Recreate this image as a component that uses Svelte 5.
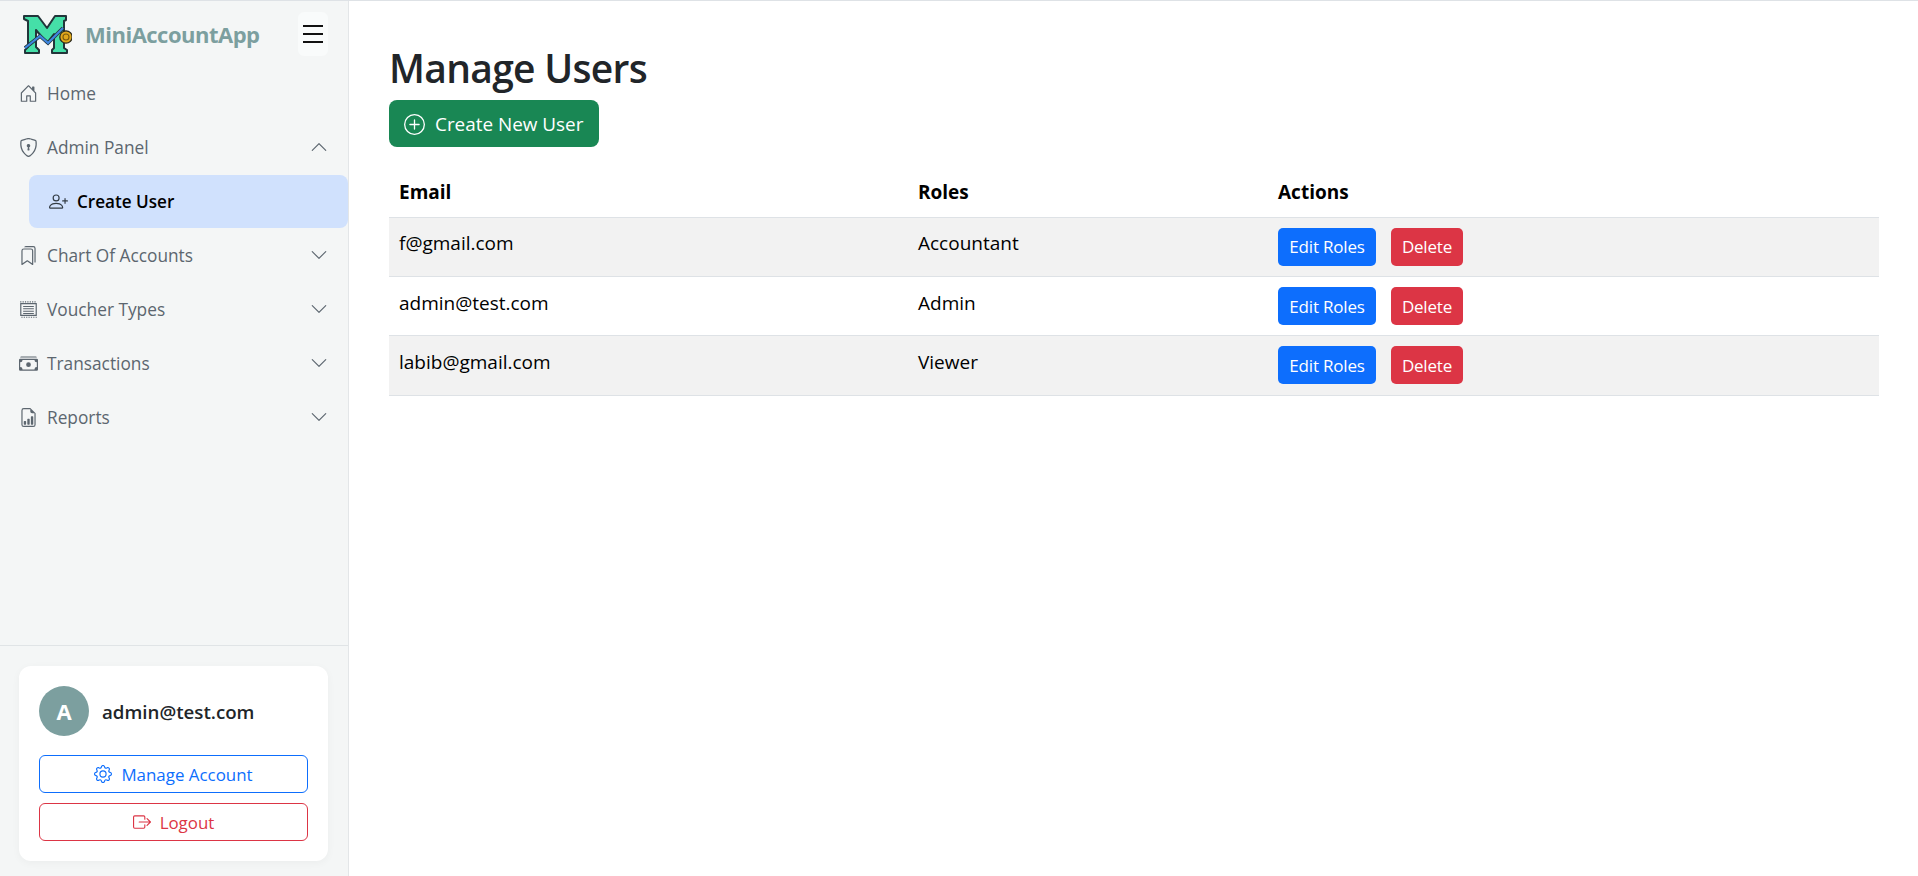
<script>
  const chevronDown = 'M1.646 4.646a.5.5 0 0 1 .708 0L8 10.293l5.646-5.647a.5.5 0 0 1 .708.708l-6 6a.5.5 0 0 1-.708 0l-6-6a.5.5 0 0 1 0-.708z';
  const chevronUp = 'M7.646 4.646a.5.5 0 0 1 .708 0l6 6a.5.5 0 0 1-.708.708L8 5.707l-5.646 5.647a.5.5 0 0 1-.708-.708l6-6z';

  const icons = {
    home: 'M8.354 1.146a.5.5 0 0 0-.708 0l-6 6A.5.5 0 0 0 1.5 7.5v7a.5.5 0 0 0 .5.5h4.5a.5.5 0 0 0 .5-.5v-4h2v4a.5.5 0 0 0 .5.5H14a.5.5 0 0 0 .5-.5v-7a.5.5 0 0 0-.146-.354L13 5.793V2.5a.5.5 0 0 0-.5-.5h-1a.5.5 0 0 0-.5.5v1.293L8.354 1.146zM2.5 14V7.707l5.5-5.5 5.5 5.5V14H10v-4a.5.5 0 0 0-.5-.5h-3a.5.5 0 0 0-.5.5v4H2.5z',
    shield: 'M5.338 1.59a61.44 61.44 0 0 0-2.837.856.481.481 0 0 0-.328.39c-.554 4.157.726 7.19 2.253 9.188a10.725 10.725 0 0 0 2.287 2.233c.346.244.652.42.893.533.12.057.218.095.293.118a.55.55 0 0 0 .101.025.615.615 0 0 0 .1-.025c.076-.023.174-.061.294-.118.24-.113.547-.29.893-.533a10.726 10.726 0 0 0 2.287-2.233c1.527-1.997 2.807-5.031 2.253-9.188a.48.48 0 0 0-.328-.39c-.651-.213-1.75-.56-2.837-.855C9.552 1.29 8.531 1.067 8 1.067c-.53 0-1.552.223-2.662.524zM5.072.56C6.157.265 7.31 0 8 0s1.843.265 2.928.56c1.11.3 2.229.655 2.887.87a1.54 1.54 0 0 1 1.044 1.262c.596 4.477-.787 7.795-2.465 9.99a11.775 11.775 0 0 1-2.517 2.453 7.159 7.159 0 0 1-1.048.625c-.28.132-.581.24-.829.24s-.548-.108-.829-.24a7.158 7.158 0 0 1-1.048-.625 11.777 11.777 0 0 1-2.517-2.453C1.928 10.487.545 7.169 1.141 2.692A1.54 1.54 0 0 1 2.185 1.43 62.456 62.456 0 0 1 5.072.56zM9.5 6.5a1.5 1.5 0 0 1-1 1.415l.385 1.99a.5.5 0 0 1-.491.595h-.788a.5.5 0 0 1-.49-.595l.384-1.99a1.5 1.5 0 1 1 2-1.415z',
    person: 'M6 8a3 3 0 1 0 0-6 3 3 0 0 0 0 6zm2-3a2 2 0 1 1-4 0 2 2 0 0 1 4 0zm4 8c0 1-1 1-1 1H1s-1 0-1-1 1-4 6-4 6 3 6 4zm-1-.004c-.001-.246-.154-.986-.832-1.664C9.516 10.68 8.289 10 6 10c-2.29 0-3.516.68-4.168 1.332-.678.678-.83 1.418-.832 1.664h10zM13.5 5a.5.5 0 0 1 .5.5V7h1.5a.5.5 0 0 1 0 1H14v1.5a.5.5 0 0 1-1 0V8h-1.5a.5.5 0 0 1 0-1H13V5.5a.5.5 0 0 1 .5-.5z',
    bookmarks: 'M2 4a2 2 0 0 1 2-2h6a2 2 0 0 1 2 2v11.5a.5.5 0 0 1-.777.416L7 13.101l-4.223 2.815A.5.5 0 0 1 2 15.5V4zm2-1a1 1 0 0 0-1 1v10.566l3.723-2.482a.5.5 0 0 1 .554 0L11 14.566V4a1 1 0 0 0-1-1H4zM4.268 1H12a1 1 0 0 1 1 1v11.768l.223.148A.5.5 0 0 0 14 13.5V2a2 2 0 0 0-2-2H6a2 2 0 0 0-1.732 1z',
    receipt: 'M1 2.5h14v11H1zM2 3.5v9h12v-9zM1 1h1v1H1zM3 1h1v1H3zM5 1h1v1H5zM7 1h1v1H7zM9 1h1v1H9zM11 1h1v1h-1zM13 1h1v1h-1zM2 14h1v1H2zM4 14h1v1H4zM6 14h1v1H6zM8 14h1v1H8zM10 14h1v1h-1zM12 14h1v1h-1zM14 14h1v1h-1zM3.5 5h9v.8h-9zM3.5 7h9v.8h-9zM3.5 9h9v.8h-9zM3.5 11h9v.8h-9z',
    cash: 'M1 3a1 1 0 0 1 1-1h12a1 1 0 0 1 1 1H1zm7 8a2 2 0 1 0 0-4 2 2 0 0 0 0 4zM0 5a1 1 0 0 1 1-1h14a1 1 0 0 1 1 1v8a1 1 0 0 1-1 1H1a1 1 0 0 1-1-1V5zm3 0a2 2 0 0 1-2 2v4a2 2 0 0 1 2 2h10a2 2 0 0 1 2-2V7a2 2 0 0 1-2-2H3z',
    report: 'M10 13.5a.5.5 0 0 0 .5.5h1a.5.5 0 0 0 .5-.5v-6a.5.5 0 0 0-.5-.5h-1a.5.5 0 0 0-.5.5v6zm-2.5.5a.5.5 0 0 1-.5-.5v-4a.5.5 0 0 1 .5-.5h1a.5.5 0 0 1 .5.5v4a.5.5 0 0 1-.5.5h-1zm-3 0a.5.5 0 0 1-.5-.5v-2a.5.5 0 0 1 .5-.5h1a.5.5 0 0 1 .5.5v2a.5.5 0 0 1-.5.5h-1zM14 14V4.5L9.5 0H4a2 2 0 0 0-2 2v12a2 2 0 0 0 2 2h8a2 2 0 0 0 2-2zM9.5 3A1.5 1.5 0 0 0 11 4.5h2V14a1 1 0 0 1-1 1H4a1 1 0 0 1-1-1V2a1 1 0 0 1 1-1h5.5v2z',
    gear: 'M8 4.754a3.246 3.246 0 1 0 0 6.492 3.246 3.246 0 0 0 0-6.492zM5.754 8a2.246 2.246 0 1 1 4.492 0 2.246 2.246 0 0 1-4.492 0zM9.796 1.343c-.527-1.79-3.065-1.79-3.592 0l-.094.319a.873.873 0 0 1-1.255.52l-.292-.16c-1.64-.892-3.433.902-2.54 2.541l.159.292a.873.873 0 0 1-.52 1.255l-.319.094c-1.79.527-1.79 3.065 0 3.592l.319.094a.873.873 0 0 1 .52 1.255l-.16.292c-.892 1.64.901 3.434 2.541 2.54l.292-.159a.873.873 0 0 1 1.255.52l.094.319c.527 1.79 3.065 1.79 3.592 0l.094-.319a.873.873 0 0 1 1.255-.52l.292.16c1.64.893 3.434-.902 2.54-2.541l-.159-.292a.873.873 0 0 1 .52-1.255l.319-.094c1.79-.527 1.79-3.065 0-3.592l-.319-.094a.873.873 0 0 1-.52-1.255l.16-.292c.893-1.64-.902-3.433-2.541-2.54l-.292.159a.873.873 0 0 1-1.255-.52l-.094-.319zm-2.633.283c.246-.835 1.428-.835 1.674 0l.094.319a1.873 1.873 0 0 0 2.693 1.115l.291-.16c.764-.415 1.6.42 1.184 1.185l-.159.292a1.873 1.873 0 0 0 1.116 2.692l.318.094c.835.246.835 1.428 0 1.674l-.319.094a1.873 1.873 0 0 0-1.115 2.693l.16.291c.415.764-.42 1.6-1.185 1.184l-.291-.159a1.873 1.873 0 0 0-2.693 1.116l-.094.318c-.246.835-1.428.835-1.674 0l-.094-.319a1.873 1.873 0 0 0-2.692-1.115l-.292.16c-.764.415-1.6-.42-1.184-1.185l.159-.291A1.873 1.873 0 0 0 1.945 8.93l-.319-.094c-.835-.246-.835-1.428 0-1.674l.319-.094A1.873 1.873 0 0 0 3.06 4.377l-.16-.292c-.415-.764.42-1.6 1.185-1.184l.292.159a1.873 1.873 0 0 0 2.692-1.115l.094-.319z',
    logout: 'M10 12.5a.5.5 0 0 1-.5.5h-8a.5.5 0 0 1-.5-.5v-9a.5.5 0 0 1 .5-.5h8a.5.5 0 0 1 .5.5v2a.5.5 0 0 0 1 0v-2A1.5 1.5 0 0 0 9.5 2h-8A1.5 1.5 0 0 0 0 3.5v9A1.5 1.5 0 0 0 1.5 14h8a1.5 1.5 0 0 0 1.5-1.5v-2a.5.5 0 0 0-1 0v2zM15.854 8.354a.5.5 0 0 0 0-.708l-3-3a.5.5 0 0 0-.708.708L14.293 7.5H5.5a.5.5 0 0 0 0 1h8.793l-2.147 2.146a.5.5 0 0 0 .708.708l3-3z',
    plus: 'M8 15A7 7 0 1 1 8 1a7 7 0 0 1 0 14zm0 1A8 8 0 1 0 8 0a8 8 0 0 0 0 16zM8 4a.5.5 0 0 1 .5.5v3h3a.5.5 0 0 1 0 1h-3v3a.5.5 0 0 1-1 0v-3h-3a.5.5 0 0 1 0-1h3v-3A.5.5 0 0 1 8 4z'
  };

  const topNav = [
    { label: 'Home', icon: 'home' },
    { label: 'Admin Panel', icon: 'shield', chevron: chevronUp }
  ];
  const restNav = [
    { label: 'Chart Of Accounts', icon: 'bookmarks', chevron: chevronDown },
    { label: 'Voucher Types', icon: 'receipt', chevron: chevronDown },
    { label: 'Transactions', icon: 'cash', chevron: chevronDown },
    { label: 'Reports', icon: 'report', chevron: chevronDown }
  ];

  const users = [
    { email: 'f@gmail.com', role: 'Accountant' },
    { email: 'admin@test.com', role: 'Admin' },
    { email: 'labib@gmail.com', role: 'Viewer' }
  ];
</script>

{#snippet navRow(item)}
  <div class="nav-row">
    <svg class="nav-icon" viewBox="0 0 16 16" fill="currentColor"><path d={icons[item.icon]}></path></svg>
    <span class="nav-label">{item.label}</span>
    {#if item.chevron}
      <svg class="chevron" viewBox="0 0 16 16" fill="currentColor"><path d={item.chevron}></path></svg>
    {/if}
  </div>
{/snippet}

<div class="page">
  <aside class="sidebar">
    <div class="brand">
      <svg class="logo" viewBox="0 0 50 42">
        <path d="M2 3H16L25 15 33 3H44V7L42 8V35L45 37V40H30V37L32 35V21L25 30 14 17V34L17 37V40H3V37L6 34V8L2 6Z" fill="#45dfa8" stroke="#22353a" stroke-width="2" stroke-linejoin="round"></path>
        <path d="M3 35 L18 23 L26 30 L41 15" fill="none" stroke="#22353a" stroke-width="3.6"></path>
        <path d="M3 35 L18 23 L26 30 L41 15" fill="none" stroke="#3f86e0" stroke-width="2.2"></path>
        <circle cx="44" cy="24" r="6.2" fill="#e0a81c" stroke="#2b2b20" stroke-width="1.3"></circle>
        <circle cx="44" cy="24" r="3" fill="none" stroke="#7a5a10" stroke-width="1.1"></circle>
      </svg>
      <span class="brand-name">MiniAccountApp</span>
      <button class="burger" aria-label="Toggle menu">
        <span></span><span></span><span></span>
      </button>
    </div>

    <nav class="nav">
      {#each topNav as item}
        {@render navRow(item)}
      {/each}
      <div class="sub-row">
        <svg class="sub-icon" viewBox="0 0 16 16" fill="currentColor"><path d={icons.person}></path></svg>
        <span>Create User</span>
      </div>
      {#each restNav as item}
        {@render navRow(item)}
      {/each}
    </nav>

    <div class="side-foot">
      <div class="user-card">
        <div class="user-head">
          <div class="avatar">A</div>
          <span class="user-email">admin@test.com</span>
        </div>
        <button class="outline blue">
          <svg viewBox="0 0 16 16" fill="currentColor"><path d={icons.gear}></path></svg>
          Manage Account
        </button>
        <button class="outline red">
          <svg viewBox="0 0 16 16" fill="currentColor"><path d={icons.logout}></path></svg>
          Logout
        </button>
      </div>
    </div>
  </aside>

  <main class="main">
    <h1>Manage Users</h1>
    <button class="create-btn">
      <svg viewBox="0 0 16 16" fill="currentColor"><path d={icons.plus}></path></svg>
      Create New User
    </button>

    <table>
      <thead>
        <tr>
          <th class="col-email">Email</th>
          <th class="col-roles">Roles</th>
          <th>Actions</th>
        </tr>
      </thead>
      <tbody>
        {#each users as user}
          <tr>
            <td>{user.email}</td>
            <td>{user.role}</td>
            <td class="actions">
              <button class="small-btn edit">Edit Roles</button>
              <button class="small-btn del">Delete</button>
            </td>
          </tr>
        {/each}
      </tbody>
    </table>
  </main>
</div>

<style>
  :global(body) {
    margin: 0;
    background: #fff;
    font-family: "Open Sans", "Noto Sans", sans-serif;
  }

  button {
    font-family: inherit;
    cursor: pointer;
  }

  .page {
    display: flex;
    height: 875px;
    border-top: 1px solid #dee2e6;
  }

  .sidebar {
    width: 348px;
    flex-shrink: 0;
    display: flex;
    flex-direction: column;
    background: #f4f6f6;
    border-right: 1px solid #e3e6e8;
  }

  .brand {
    display: flex;
    align-items: center;
    height: 65px;
    padding-left: 22px;
    box-sizing: border-box;
  }

  .logo {
    width: 50px;
    height: 42px;
    flex-shrink: 0;
  }

  .brand-name {
    margin-left: 13px;
    font-size: 22px;
    font-weight: 700;
    color: #7c9f9f;
    letter-spacing: -0.5px;
  }

  .burger {
    margin-left: auto;
    margin-right: 20px;
    width: 30px;
    height: 44px;
    border: none;
    border-radius: 6px;
    background: #f9fbfb;
    display: flex;
    flex-direction: column;
    justify-content: center;
    align-items: center;
    gap: 6px;
    padding: 0;
  }

  .burger span {
    display: block;
    width: 20px;
    height: 2px;
    background: #111;
  }

  .nav {
    flex: 1;
    display: flex;
    flex-direction: column;
  }

  .nav-row {
    display: flex;
    align-items: center;
    height: 54px;
    padding: 0 20px 0 19px;
    color: #5c666f;
    font-size: 17.3px;
  }

  .nav-icon {
    width: 19px;
    height: 19px;
    flex-shrink: 0;
    margin-right: 9px;
  }

  .nav-label {
    flex: 1;
    padding-top: 1px;
  }

  .chevron {
    width: 18px;
    height: 18px;
  }

  .sub-row {
    display: flex;
    align-items: center;
    height: 53px;
    margin: 1px 0 0 29px;
    padding-left: 20px;
    background: #d0e1fd;
    border-radius: 8px;
    color: #000;
    font-size: 17.1px;
    font-weight: 600;
  }

  .sub-icon {
    width: 19px;
    height: 19px;
    margin-right: 9px;
    color: #333c44;
  }

  .side-foot {
    border-top: 1px solid #e0e4e6;
    padding: 20px 20px 15px 19px;
  }

  .user-card {
    background: #fff;
    border-radius: 12px;
    padding: 20px;
    box-shadow: 0 2px 8px rgba(0, 0, 0, 0.04);
    display: flex;
    flex-direction: column;
  }

  .user-head {
    display: flex;
    align-items: center;
    gap: 13px;
    margin-bottom: 19px;
  }

  .avatar {
    width: 50px;
    height: 50px;
    border-radius: 50%;
    background: #7c9f9f;
    color: #fff;
    font-weight: 700;
    font-size: 22px;
    display: flex;
    align-items: center;
    justify-content: center;
  }

  .user-email {
    font-size: 18.7px;
    font-weight: 600;
    color: #212529;
  }

  .outline {
    height: 38px;
    border-radius: 6px;
    background: #fff;
    font-size: 16.9px;
    display: flex;
    align-items: center;
    justify-content: center;
    gap: 9px;
    margin-bottom: 10px;
  }

  .outline:last-child {
    margin-bottom: 0;
  }

  .outline svg {
    width: 18px;
    height: 18px;
  }

  .blue {
    border: 1px solid #0d6efd;
    color: #0d6efd;
  }

  .red {
    border: 1px solid #dc3545;
    color: #dc3545;
  }

  .main {
    flex: 1;
    padding: 0 39px 0 40px;
    min-width: 0;
  }

  h1 {
    margin: 43px 0 8px;
    font-size: 39px;
    line-height: 48px;
    font-weight: 600;
    color: #212529;
    letter-spacing: -0.7px;
  }

  .create-btn {
    display: flex;
    align-items: center;
    gap: 10px;
    height: 47px;
    width: 210px;
    padding: 1px 15px 0;
    box-sizing: border-box;
    border: none;
    border-radius: 8px;
    background: #198754;
    color: #fff;
    font-size: 18.9px;
    white-space: nowrap;
  }

  .create-btn svg {
    width: 21px;
    height: 21px;
    flex-shrink: 0;
  }

  table {
    width: 100%;
    margin-top: 16px;
    border-collapse: collapse;
    color: #000;
    font-size: 19px;
    table-layout: fixed;
  }

  th {
    text-align: left;
    font-weight: 700;
    height: 54px;
    padding: 4px 10px 0;
    box-sizing: border-box;
    border-bottom: 1px solid #dee2e6;
  }

  .col-email {
    width: 519px;
  }

  .col-roles {
    width: 360px;
  }

  td {
    height: 59.4px;
    padding: 0 10px 7px;
    box-sizing: border-box;
    border-bottom: 1px solid #dee2e6;
  }

  tbody tr:nth-child(odd) {
    background: #f2f2f2;
  }

  td.actions {
    padding: 0 10px;
  }

  .small-btn {
    height: 38px;
    border: none;
    border-radius: 5px;
    color: #fff;
    font-size: 17px;
    letter-spacing: -0.2px;
    padding: 0;
    vertical-align: middle;
  }

  .edit {
    width: 98px;
    background: #0d6efd;
    margin-right: 10px;
  }

  .del {
    width: 72px;
    background: #dc3545;
  }
</style>
